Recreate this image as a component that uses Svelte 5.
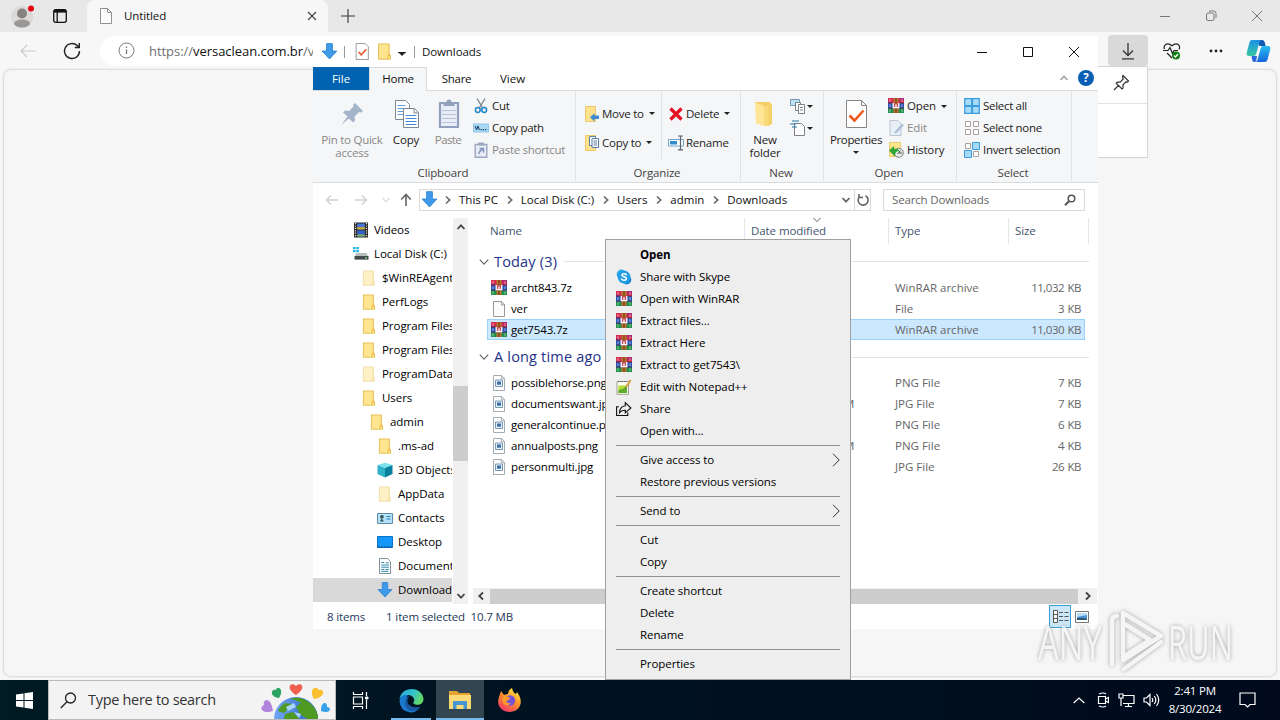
<script>
  let tree = [
    { name: 'Videos', icon: 'video', depth: 0 },
    { name: 'Local Disk (C:)', icon: 'disk', depth: 0 },
    { name: '$WinREAgent', icon: 'folderpale', depth: 1 },
    { name: 'PerfLogs', icon: 'folder', depth: 1 },
    { name: 'Program Files', icon: 'folder', depth: 1 },
    { name: 'Program Files (x86)', icon: 'folder', depth: 1 },
    { name: 'ProgramData', icon: 'folderpale', depth: 1 },
    { name: 'Users', icon: 'folder', depth: 1 },
    { name: 'admin', icon: 'folder', depth: 2 },
    { name: '.ms-ad', icon: 'folder', depth: 3 },
    { name: '3D Objects', icon: 'cube', depth: 3 },
    { name: 'AppData', icon: 'folderpale', depth: 3 },
    { name: 'Contacts', icon: 'contacts', depth: 3 },
    { name: 'Desktop', icon: 'desktop', depth: 3 },
    { name: 'Documents', icon: 'document', depth: 3 },
    { name: 'Downloads', icon: 'down', depth: 3 }
  ];
  let selectedFolder = 'Downloads';
  let selectedFile = 'get7543.7z';

  let groups = [
    {
      title: 'Today (3)',
      files: [
        { name: 'archt843.7z', icon: 'rar', date: '8/30/2024 2:41 PM', type: 'WinRAR archive', size: '11,032 KB' },
        { name: 'ver', icon: 'blank', date: '8/30/2024 2:41 PM', type: 'File', size: '3 KB' },
        { name: 'get7543.7z', icon: 'rar', date: '8/30/2024 2:41 PM', type: 'WinRAR archive', size: '11,030 KB' }
      ]
    },
    {
      title: 'A long time ago (5)',
      files: [
        { name: 'possiblehorse.png', icon: 'image', date: '8/5/2022 3:14 PM', type: 'PNG File', size: '7 KB' },
        { name: 'documentswant.jpg', icon: 'image', date: '12/12/2020 3:14 PM', type: 'JPG File', size: '7 KB' },
        { name: 'generalcontinue.png', icon: 'image', date: '4/8/2021 3:14 PM', type: 'PNG File', size: '6 KB' },
        { name: 'annualposts.png', icon: 'image', date: '10/21/2020 3:14 PM', type: 'PNG File', size: '4 KB' },
        { name: 'personmulti.jpg', icon: 'image', date: '6/6/2021 3:14 PM', type: 'JPG File', size: '26 KB' }
      ]
    }
  ];

  let menu = [
    [
      { label: 'Open', bold: true },
      { label: 'Share with Skype', icon: 'skype' },
      { label: 'Open with WinRAR', icon: 'rar' },
      { label: 'Extract files...', icon: 'rar' },
      { label: 'Extract Here', icon: 'rar' },
      { label: 'Extract to get7543\\', icon: 'rar' },
      { label: 'Edit with Notepad++', icon: 'notepad' },
      { label: 'Share', icon: 'share' },
      { label: 'Open with...' }
    ],
    [{ label: 'Give access to', sub: true }, { label: 'Restore previous versions' }],
    [{ label: 'Send to', sub: true }],
    [{ label: 'Cut' }, { label: 'Copy' }],
    [{ label: 'Create shortcut' }, { label: 'Delete' }, { label: 'Rename' }],
    [{ label: 'Properties' }]
  ];

  let crumbs = ['This PC', 'Local Disk (C:)', 'Users', 'admin', 'Downloads'];
</script>

{#snippet icon(name, size = 16)}
  <svg class="icon" width={size} height={size} viewBox="0 0 16 16" fill="none">
    {#if name === 'rar'}
      <path fill="#d62c4e" d="M0 0h16v5.300H0z" />
      <path fill="#2c53b8" d="M0 5.300h16v5H0z" />
      <path fill="#1f8f4a" d="M0 10.300h16V15H0z" />
      <path fill="#8d2a86" d="M11 0h5v2.500h-5zM0 3.500h3v1.800H0z" opacity=".6" />
      <path stroke="#2c1c3c" d="M0 5.200h16M0 10.200h16" stroke-width=".8" />
      <path fill="#fff" d="M1.500 1h1v3h-1zM13.500 1h1v3h-1zM1.500 6.200h1v3h-1zM13.500 6.200h1v3h-1zM1.500 11.200h1v3h-1zM13.500 11.200h1v3h-1z" opacity=".5" />
      <path fill="#b9742f" d="M5.500 0h5v5h-5zM5.500 10.500h5V15h-5z" />
      <path fill="#7b441b" d="M7.300 0h1.400v15H7.300z" />
      <path fill="#c9525c" d="M5 5h6v5.500H5z" />
      <path stroke="#fff" stroke-width="1.300" d="M5.200 5v4.700h5.600V5M8 6.500v3" />
    {:else if name === 'folder' || name === 'folderpale'}
      <g opacity={name === 'folderpale' ? 0.5 : 1}>
        <path fill="#ffdf7c" stroke="#dfb64b" stroke-width=".8" d="M2.400.900h10v10.400h1.100v4H2.400z" />
        <path fill="#fff0b4" d="M3.200 1.600h7.600v12.800H3.200z" opacity=".35" />
        <path stroke="#e5b840" stroke-width=".8" d="M11.200 15v-3.400h2" />
      </g>
    {:else if name === 'down'}
      <path fill="#3f9bea" stroke="#257fd0" stroke-width=".8" d="M5.300.600h5.400v7h4.200L8 15 1.100 7.600h4.200z" />
    {:else if name === 'blank'}
      <path fill="#fbfbfb" stroke="#8d8d8d" stroke-width=".9" d="M2.500.500h8l3 3v12h-11zM10.300.500v3.300h3.200" />
    {:else if name === 'image'}
      <path fill="#fff" stroke="#9aa3aa" stroke-width=".9" d="M2.500.500h8l3 3v12h-11zM10.300.500v3.300h3.200" />
      <path fill="#e3f1fb" stroke="#6d8caa" stroke-width=".9" d="M4.500 5h7v6.500h-7z" />
      <path fill="#3c6ea3" d="M6 6.500h4v3.200H6z" />
    {:else if name === 'document'}
      <path fill="#fff" stroke="#708793" stroke-width=".9" d="M2.500.500h8l3 3v12h-11z" />
      <path stroke="#2c86a8" d="M4.300 4.500h3M4.300 7h7.500M4.300 9.200h7.500M4.300 11.400h3M8.500 11.400h3.300M4.300 13.300h7" />
      <path stroke="#2c86a8" d="M8.800 4.800h3" />
    {:else if name === 'video'}
      <path fill="#242424" d="M1 .500h14v15H1z" />
      <path fill="#4477d6" d="M4.200 1.500h7.600v6H4.200z" />
      <path fill="#c2a439" d="M4.200 5h7.600v2.500H4.200z" />
      <path fill="#3862ca" d="M4.200 8.500h7.600v6H4.200z" />
      <path fill="#7cb45b" d="M4.200 12.500h7.600v2H4.200z" />
      <path stroke="#e8e8e8" stroke-dasharray="1.200 1.200" stroke-width="1.300" d="M2.500 1v14M13.500 1v14" />
    {:else if name === 'disk'}
      <path fill="#25b8e4" d="M0 1h2.600v2.300H0zM3.300 1h2.600v2.300H3.300zM0 4h2.600v2.300H0zM3.300 4h2.600v2.300H3.300z" />
      <path fill="#b9bec1" d="M3.500 7h10l1.500 3.200H1.500z" />
      <path fill="#454a4d" d="M1.500 10h14v3.600h-14z" />
      <path fill="#65e07a" d="M12 11.300h2v1.200h-2z" />
    {:else if name === 'cube'}
      <path fill="#7ce2ee" d="M8 .700 15.500 3 8 6 .500 3z" />
      <path fill="#2fb1c8" d="M.500 3 8 6v9.400L.500 12z" />
      <path fill="#087f9f" d="M15.500 3 8 6v9.400l7.500-3.400z" />
    {:else if name === 'contacts'}
      <path fill="#b7e3fa" stroke="#5e8ba8" d="M.500 3.500h15v10H.500z" />
      <path fill="#35575b" d="M5 5a1.500 1.500 0 0 1 0 3.600l2 2.900H2.700l2-2.900A1.500 1.500 0 0 1 5 5z" />
      <path stroke="#277eb7" d="M9.500 6.500h4M9.500 9h4" />
    {:else if name === 'desktop'}
      <path fill="#1597fa" stroke="#0872c5" d="M.500 2.500h15v11H.500z" />
      <path stroke="#084a8b" stroke-dasharray="2 1" d="M1 13h14" />
    {:else if name === 'skype'}
      <circle cx="5.400" cy="5.200" r="4.700" fill="#2caae8" />
      <circle cx="10.600" cy="10.800" r="4.700" fill="#1686d9" />
      <circle cx="8" cy="8" r="6.400" fill="#229ee5" />
      <path stroke="#fff" stroke-width="1.500" stroke-linecap="round" d="M10.300 5.800C9.500 4.400 5.800 4.300 5.900 6.300c.1 1.800 4.500 1 4.500 3.200 0 2.100-4 2.100-4.900.500" />
    {:else if name === 'notepad'}
      <path fill="#fafcef" stroke="#888c78" stroke-width=".8" d="M1 2.500h11.500v12.800H1z" />
      <path fill="#b4dc36" d="M2.500 6.500h8.500v7.500H2.500z" />
      <path fill="#5eae2c" d="M2.500 11 11 8.500V14H2.500z" />
      <path stroke="#555" d="M2 2.500h9.500" stroke-dasharray="1 1" />
      <path stroke="#d99a3a" stroke-width="1.800" d="m10 8 4.700-7" />
      <path stroke="#444" d="m9 9.500 1-1.500" />
    {:else if name === 'share'}
      <path stroke="#111" stroke-width="1.100" d="M3 5.700H.600v8.800h11.200v-3" />
      <path stroke="#111" stroke-width="1.100" d="M9.300 1.700 14.900 7l-5.600 4.900V9.200c-3.100-.100-4.600.900-5.800 2.600.200-3.700 2-6.600 5.800-7z" />
    {:else if name === 'cut'}
      <path stroke="#7d8790" stroke-width="1.400" d="M4 .500 9.700 10M12 .500 6.300 10" />
      <circle cx="4.800" cy="12" r="2.400" stroke="#2385c6" stroke-width="1.500" />
      <circle cx="11.200" cy="12" r="2.400" stroke="#2385c6" stroke-width="1.500" />
    {:else if name === 'path'}
      <path fill="#a9d9f7" stroke="#8cc4ea" d="M.500 4h15v8H.500z" />
      <path stroke="#183c5c" d="m2.200 6 1.400 4L5 6l1.400 4" />
      <path stroke="#183c5c" stroke-dasharray="1.300 1" stroke-width="1.200" d="M7.500 9.700h6" />
    {:else if name === 'shortcut'}
      <path fill="#e6eaf4" stroke="#8a9bb8" stroke-width="1.400" d="M2.200 2.500h11.600v12.700H2.200z" />
      <path fill="#8a9bb8" d="M5 .500h6v3H5z" />
      <path stroke="#7189b4" stroke-width="1.500" d="M6 12c0-2.500 1-3.500 4-5M6.500 6.500h4v4" />
    {:else if name === 'moveto'}
      <path fill="#ffe28b" stroke="#edca69" d="M1.500.500h10v15h-10z" />
      <path fill="#428ad0" d="m6 11.300 4.500-4v2.200H15v3.600h-4.500v2.300z" />
    {:else if name === 'copyto'}
      <path fill="#ffe28b" stroke="#edca69" d="M1.500.500h10v15h-10z" />
      <path fill="#fff" stroke="#5a7da8" d="M5.500 1.500h6v9h-6z" />
      <path fill="#fff" stroke="#5a7da8" d="M8 3.500h6.500v9H8zM9.500 6h3.500M9.500 8h3.500M9.500 10h3.500" />
    {:else if name === 'delete'}
      <path stroke="#e31123" stroke-width="3.200" d="m2.500 2.500 11 11M13.500 2.500l-11 11" />
    {:else if name === 'rename'}
      <path fill="#fff" stroke="#74a4ca" d="M.500 4.500h15v6.500H.500z" />
      <path fill="#318ccc" d="M2 6h7v3.500H2z" />
      <path stroke="#5b6570" stroke-width="1.200" d="M12.500 1.500v13M10 1h5M10 14.800h5" />
    {:else if name === 'newitem'}
      <path fill="#b9e1f7" stroke="#7598b0" d="M.500 1.500h9v6h-9z" />
      <path fill="#fff" stroke="#7c8288" d="M5.500 4.500h5v8h-5z" />
      <path fill="#fff" stroke="#7c8288" d="M8.500 6.500h6v9h-6zM10 9.500h3M10 12h3" />
    {:else if name === 'easy'}
      <path fill="#fff" stroke="#7c8288" d="M4.500 3.500h7l3 3v9h-10z" />
      <path stroke="#2676ae" stroke-width="1.200" d="M2 1h7M0 4h6M2 7h5" />
    {:else if name === 'edit'}
      <path fill="#e8eef8" stroke="#aebdd2" d="M2 .500h8l3 3v12H2z" />
      <path stroke="#9fb3cf" stroke-width="2.400" d="m7 13 8-8.500" />
    {:else if name === 'history'}
      <path fill="#ffe58b" stroke="#e9cd73" d="M1.500.500h11v14h-11z" />
      <circle cx="10.800" cy="10.800" r="4.500" fill="#e8eee9" stroke="#77807a" />
      <path fill="#31a638" d="M1 8.500 6 4v2.500c3 0 5 1 6 3-3-1-5 .300-5.200 5z" />
      <path stroke="#474f49" d="m9.500 12 3-3.500M11 11h3" />
    {:else if name === 'selall'}
      <path fill="#a6dafa" stroke="#3b9bdd" stroke-width="1.200" d="M.700.700h7v7h-7zM8.500.700h6.800v7H8.500zM.700 8.500h7v6.800h-7zM8.500 8.500h6.800v6.800H8.500z" />
    {:else if name === 'selnone'}
      <path fill="#fff" stroke="#aaa19c" d="M1.500 1.500h5v5h-5zM9.500 1.500h5v5h-5zM1.500 9.500h5v5h-5zM9.500 9.500h5v5h-5z" />
    {:else if name === 'selinv'}
      <path fill="#fff" stroke="#aaa19c" d="M1.500 1.500h5v5h-5zM9.500 9.500h5v5h-5z" />
      <path fill="#a6dafa" stroke="#3b9bdd" d="M8.500.500h7v7h-7zM.500 8.500h7v7h-7z" />
    {:else if name === 'check'}
      <path fill="#fff" stroke="#8b8b8b" stroke-width=".8" d="M2 .500h8.500L13.500 3.500v12H2z" />
      <path stroke="#e8572b" stroke-width="1.500" d="m4.300 8.500 2.500 2.700 4.800-5.300" />
    {/if}
  </svg>
{/snippet}

{#snippet chevron(dir)}
  <svg class="chev {dir}" width="10" height="10" viewBox="0 0 10 10" fill="none">
    <path d="M1.500 3 5 6.700 8.500 3" />
  </svg>
{/snippet}

{#snippet small(name, label, arrow = false, disabled = false)}
  <button class="small" class:disabled>
    {@render icon(name)}
    <span>{label}</span>
    {#if arrow}<i class="caret"></i>{/if}
  </button>
{/snippet}

<div class="screen">
  <section class="browser">
    <header class="tabstrip">
      <div class="profile">
        <svg width="26" height="26" viewBox="0 0 26 26">
          <circle cx="12" cy="14" r="11" fill="#dcdad8" />
          <circle cx="12" cy="10.500" r="5" fill="#858381" />
          <ellipse cx="12" cy="20.500" rx="8" ry="4" fill="#9a9896" />
          <circle cx="21" cy="5.500" r="3" fill="#e3000f" />
        </svg>
      </div>
      <svg class="workspaces" width="14" height="14" viewBox="0 0 14 14" fill="none" stroke="#111" stroke-width="1.300">
        <rect x=".7" y=".7" width="12.600" height="12.600" rx="2" />
        <path d="M1 2.300h12" stroke-width="2.600" />
        <path d="M4.200 3v10" />
      </svg>
      <div class="tab">
        <svg width="12" height="16" viewBox="0 0 12 16" fill="#fff" stroke="#909090">
          <path d="M.500.500h7l4 4v11H.500zM7.500.500v4h4" />
        </svg>
        <span>Untitled</span>
        <svg class="tabclose" width="10" height="10" viewBox="0 0 10 10" stroke="#444" stroke-width="1.100"><path d="m1 1 8 8M9 1 1 9" /></svg>
      </div>
      <svg class="newtab" width="14" height="14" viewBox="0 0 14 14" stroke="#333" stroke-width="1.100"><path d="M7 0v14M0 7h14" /></svg>
      <div class="wincontrols">
        <svg width="12" height="12" viewBox="0 0 12 12" fill="none"><path d="M1 6.500h10" /></svg>
        <svg width="12" height="12" viewBox="0 0 12 12" fill="none"><rect x="1.500" y="3" width="7.500" height="7.500" rx="1.500" /><path d="M4 1h4.500A2.500 2.500 0 0 1 11 3.500V8" /></svg>
        <svg width="12" height="12" viewBox="0 0 12 12" fill="none"><path d="m1 1 10 10M11 1 1 11" /></svg>
      </div>
    </header>
    <div class="toolbar">
      <svg class="back" width="16" height="14" viewBox="0 0 16 14" fill="none" stroke="#c9c9c9" stroke-width="1.100"><path d="M15.500 7H1M7 1 1 7l6 6" /></svg>
      <svg class="reload" width="18" height="18" viewBox="0 0 18 18" fill="none" stroke="#222" stroke-width="1.400"><path d="M16.500 9a7.500 7.500 0 1 1-2.300-5.400L16 5.300M16.300 1v4.500h-4.500" /></svg>
      <div class="address">
        <svg width="17" height="17" viewBox="0 0 17 17" fill="none" stroke="#777"><circle cx="8.500" cy="8.500" r="7.500" /><path d="M8.500 7.500V12M8.500 4.500V6" stroke-width="1.300" /></svg>
        <span class="url">https://<b>versaclean.com.br</b>/v</span>
      </div>
      <div class="tools">
        <div class="dlbutton">
          <svg width="14" height="18" viewBox="0 0 14 18" fill="none" stroke="#333" stroke-width="1.300"><path d="M7 1v12M2 8.500l5 5 5-5M1 16.800h12" /></svg>
        </div>
        <svg class="health" width="18" height="18" viewBox="0 0 18 18" fill="none" stroke="#222" stroke-width="1.200">
          <path d="M1.500 7C0 3.500 4-.500 9 3.700 14-.500 18 3.500 16 7.500M0 8.500h5l2-3 2.500 6L11 8.500h4M4 11l5 5" />
          <circle cx="13" cy="13.500" r="4" fill="#107c10" stroke="none" /><path d="m11 13.500 1.500 1.500 2.500-3" stroke="#fff" />
        </svg>
        <svg class="dots" width="14" height="4" viewBox="0 0 14 4" fill="#222"><circle cx="2" cy="2" r="1.400" /><circle cx="7" cy="2" r="1.400" /><circle cx="12" cy="2" r="1.400" /></svg>
        <svg class="copilot" width="25" height="24" viewBox="0 0 25 24">
          <defs>
            <linearGradient id="cpa" x1="0" y1="0" x2="0" y2="1"><stop stop-color="#1b90e8" /><stop offset="1" stop-color="#37c9a2" /></linearGradient>
            <linearGradient id="cpb" x1="0" y1="0" x2="0" y2="1"><stop stop-color="#27bdf4" /><stop offset="1" stop-color="#1666db" /></linearGradient>
          </defs>
          <path fill="#1259b4" d="M10 1h6q2 0 2.600 2l1 4h-6z" />
          <path fill="url(#cpa)" d="M6 1h10q-2 0-2.500 2l-3.300 12q-.700 2-2.700 2H3q-3 0-2.200-3.500L3.600 3Q4.200 1 6 1z" />
          <path fill="url(#cpb)" d="M17 7h5q3 0 2.200 3.500L21.400 21q-.600 2-2.400 2H9q2 0 2.500-2l3.300-12q.500-2 2.200-2z" />
          <path fill="#2e65df" d="M5.500 17H11l-.800 5q-.400 1-2 1-1.700-.200-2-2z" />
        </svg>
      </div>
    </div>
    <div class="page"></div>
  </section>

  <div class="flyout">
    <div class="flyhead">
      <svg width="17" height="17" viewBox="0 0 17 17" fill="none" stroke="#333" stroke-width="1.200"><path d="m10 1.500 5.500 5.500-1 1-1.500-.200-3 3 .100 3.200-1.100 1-5.800-5.800 1-1.200 3 .100L10.200 5 9.500 2.500zM5.800 11.200 1 16" /></svg>
    </div>
  </div>

  <section class="explorer">
    <header class="titlebar">
      {@render icon('down', 17)}
      <i class="bar"></i>
      {@render icon('check', 17)}
      {@render icon('folder', 17)}
      <i class="caret qat"></i>
      <i class="bar"></i>
      <span>Downloads</span>
      <div class="buttons">
        <svg width="12" height="12" viewBox="0 0 12 12" fill="none"><path d="M1 6.500h10" /></svg>
        <svg width="12" height="12" viewBox="0 0 12 12" fill="none"><path d="M1.500 1.500h9v9h-9z" /></svg>
        <svg width="12" height="12" viewBox="0 0 12 12" fill="none"><path d="m1 1 10 10M11 1 1 11" /></svg>
      </div>
    </header>

    <nav class="tabs">
      <span class="file">File</span>
      <span class="home">Home</span>
      <span class="share">Share</span>
      <span class="view">View</span>
      <div class="help">
        {@render chevron('up')}
        <b>?</b>
      </div>
    </nav>

    <div class="ribbon">
      <div class="group clipboard">
        <div class="content">
          <button class="large disabled pin">
            <svg width="28" height="30" viewBox="0 0 28 30"><path fill="#a4b4c9" d="m17 4 8 8-2 1.500-2-.500-4.500 4.500.500 4-2 2-4-4-7.500 6 6-8-4.500-4 2-2 4 .400L15.500 7.500 15 6z" /></svg>
            <span>Pin to Quick<br />access</span>
          </button>
          <button class="large copy">
            <svg width="28" height="30" viewBox="0 0 28 30" fill="#fff" stroke="#7d8793">
              <path d="M3.500 1.500h10l4 4v15h-14z" /><path stroke="#64a0dc" d="M5.500 6.500h8M5.500 9.500h10M5.500 12.500h10M5.500 15.500h10" />
              <path d="M11.500 9.500h11l4 4v15h-15zM22 9.500v4.500h4.500" /><path stroke="#4089d6" d="M13.500 16.500h11M13.500 19.500h11M13.500 22.500h11M13.500 25.500h11" />
            </svg>
            <span>Copy</span>
          </button>
          <button class="large disabled paste">
            <svg width="24" height="30" viewBox="0 0 24 30" fill="none"><path fill="#e8edf7" stroke="#91a1bd" stroke-width="2.200" d="M4 4h18v24H4z" /><path fill="#91a1bd" d="M7.500 3h3a2.500 2.500 0 0 1 5 0h3v4h-11z" /><path stroke="#b7c3d9" d="M6 11.500h14M6 15.500h14M6 19.500h14M6 23.500h14" /></svg>
            <span>Paste</span>
          </button>
          <div class="stack">
            {@render small('cut', 'Cut')}
            {@render small('path', 'Copy path')}
            {@render small('shortcut', 'Paste shortcut', false, true)}
          </div>
        </div>
        <footer>Clipboard</footer>
      </div>
      <div class="group organize">
        <div class="content">
          <div class="stack wide">
            {@render small('moveto', 'Move to', true)}
            {@render small('copyto', 'Copy to', true)}
          </div>
          <div class="stack wide second">
            {@render small('delete', 'Delete', true)}
            {@render small('rename', 'Rename')}
          </div>
        </div>
        <footer>Organize</footer>
      </div>
      <div class="group new">
        <div class="content">
          <button class="large">
            <svg width="26" height="30" viewBox="0 0 26 30"><path fill="#f3cf69" d="M3 3h15l2 3v19l-4 2V9L3 4z" /><path fill="#ffe596" d="M3 3.500 12 7v20L4 24.500z" /><path fill="#f9d978" d="M12 7h4.500v20L12 27z" /></svg>
            <span>New<br />folder</span>
          </button>
          <div class="stack items">
            {@render small('newitem', '', true)}
            {@render small('easy', '', true)}
          </div>
        </div>
        <footer>New</footer>
      </div>
      <div class="group open">
        <div class="content">
          <button class="large">
            <svg width="26" height="30" viewBox="0 0 26 30" fill="#fff" stroke="#858585"><path d="M3.500 1.500h15l5 5v22h-20zM18.500 1.500v5h5" /><path fill="none" stroke="#f05a22" stroke-width="2.600" d="m6.500 16.500 5 5 9-10" /></svg>
            <span>Properties</span>
            <i class="caret"></i>
          </button>
          <div class="stack">
            {@render small('rar', 'Open', true)}
            {@render small('edit', 'Edit', false, true)}
            {@render small('history', 'History')}
          </div>
        </div>
        <footer>Open</footer>
      </div>
      <div class="group select">
        <div class="content">
          <div class="stack">
            {@render small('selall', 'Select all')}
            {@render small('selnone', 'Select none')}
            {@render small('selinv', 'Invert selection')}
          </div>
        </div>
        <footer>Select</footer>
      </div>
    </div>

    <div class="navrow">
      <svg class="navarrow" width="14" height="12" viewBox="0 0 14 12" stroke="#d2d2d2"><path d="M13 6H1.500M6 1.500 1.500 6 6 10.500" /></svg>
      <svg class="navarrow" width="14" height="12" viewBox="0 0 14 12" stroke="#d2d2d2"><path d="M1 6h11.500M8 1.500 12.500 6 8 10.500" /></svg>
      <span class="recent">{@render chevron('down')}</span>
      <svg class="navarrow up" width="12" height="14" viewBox="0 0 12 14" stroke="#666"><path d="M6 13V1.500M1.200 6.500 6 1.500l4.800 5" /></svg>
      <div class="crumbs">
        {@render icon('down', 17)}
        {#each crumbs as crumb}
          {@render chevron('right')}
          <span>{crumb}</span>
        {/each}
        <div class="crumbend">
          {@render chevron('down')}
          <svg width="14" height="14" viewBox="0 0 14 14" fill="none" stroke="#666" stroke-width="1.600"><path d="M9.500 2.700A5 5 0 1 1 4 3.200M3 1v3.500h4" /></svg>
        </div>
      </div>
      <div class="search">
        <span>Search Downloads</span>
        <svg width="12" height="12" viewBox="0 0 12 12" fill="none" stroke="#555" stroke-width="1.500"><circle cx="7.500" cy="4.500" r="3.300" /><path d="M5.200 7 1 11.200" stroke-width="2" /></svg>
      </div>
    </div>

    <div class="body">
      <aside>
        {#each tree as node}
          <div class="node d{node.depth}" class:current={node.name === selectedFolder}>
            {@render icon(node.icon)}
            <span>{node.name}</span>
          </div>
        {/each}
      </aside>
      <div class="vscroll">
        {@render chevron('up')}
        <div class="thumb"></div>
        {@render chevron('down')}
      </div>
      <div class="list">
        <div class="head">
          <span class="name">Name</span>
          <span class="date">Date modified {@render chevron('down')}</span>
          <span>Type</span>
          <span>Size</span>
        </div>
        {#each groups as group}
          <div class="grouphead">
            {@render chevron('down')}
            <span>{group.title}</span>
            <hr />
          </div>
          {#each group.files as file}
            <div class="row" class:selected={file.name === selectedFile}>
              <div class="name">{@render icon(file.icon)}<span>{file.name}</span></div>
              <span class="when">{file.date}</span>
              <span>{file.type}</span>
              <span class="size">{file.size}</span>
            </div>
          {/each}
        {/each}
        <div class="hscroll">
          {@render chevron('left')}
          <div class="thumb"></div>
          {@render chevron('right')}
        </div>
      </div>
    </div>

    <footer class="status">
      <span>8 items</span>
      <span>1 item selected&nbsp; 10.7 MB</span>
      <div class="views">
        <svg class="active" width="22" height="23" viewBox="0 0 22 23" fill="none" stroke="#555"><path fill="#fff" d="M4.500 5.500h4v12h-4zM4.500 9.500h4M4.500 13.500h4" /><path d="M10 7.500h4M15.500 7.500h4M10 11.500h4M15.500 11.500h4M10 15.500h4M15.500 15.500h4" /></svg>
        <svg width="14" height="12" viewBox="0 0 14 12"><path fill="#fff" stroke="#777" d="M.500.500h13v11H.500z" /><path fill="#4f94d9" d="M2 2h10v6H2z" /><path fill="#b9daf3" d="M2 2h10v2L2 6z" /><path fill="#31556d" d="M2 7q6-1 10 1v1H2z" /></svg>
      </div>
    </footer>
  </section>

  <svg class="watermark" width="200" height="70" viewBox="0 0 200 70" fill="none">
    <g class="ghost">
      <text x="2" y="54" textLength="64" lengthAdjust="spacingAndGlyphs">ANY</text>
      <text x="132" y="54" textLength="65" lengthAdjust="spacingAndGlyphs">RUN</text>
      <path stroke-width="4.500" stroke-linejoin="round" stroke-linecap="round" d="M81 10q-5 0-5 5v43M87 48V7l38 23-38 24M88 63l37-27M87 17l27 17-27 17" />
    </g>
  </svg>

  <footer class="taskbar">
    <div class="start">
      <svg width="17" height="17" viewBox="0 0 17 17" fill="#fff"><path d="M0 2.500 7.500 1.400V8H0zM8.500 1.300 17 0v8H8.500zM0 9h7.500v6.600L0 14.500zM8.500 9H17v8l-8.500-1.300z" /></svg>
    </div>
    <div class="tasksearch">
      <svg width="17" height="17" viewBox="0 0 17 17" fill="none" stroke="#222" stroke-width="1.300"><circle cx="10.500" cy="6" r="5" /><path d="M7 9.800.800 16" /></svg>
      <span>Type here to search</span>
      <svg class="earth" width="70" height="38" viewBox="0 0 70 38">
        <defs><linearGradient id="sea"><stop stop-color="#73a7f6" /><stop offset="1" stop-color="#2362be" /></linearGradient></defs>
        <circle cx="36" cy="38" r="22" fill="url(#sea)" />
        <path fill="#4f9a22" d="M30 18q10-4 20 4 8 7 8 16H47l-7-5-4-7 5-4-6-3zM25 22l8 1-5 5-4 4-6-2q2-5 7-8zM25 33l8-2 7 8H24z" />
        <path fill="#a8d6fb" d="m26 26 8-4 2 4-8 4zM34 31l7 2-2 4z" />
        <path fill="#f0604d" d="M36 14C24 6 32 0 36 5c4-5 12 1 0 9z" />
        <path fill="#2ba363" d="M19 17C8 15 12 7 16 9c1-5 9-1 3 8z" />
        <path fill="#fac02f" d="M54 18C48 8 56 4 59 9c5-2 8 7-5 9z" />
        <path fill="#b184dc" d="M13 30C1 34-1 26 4 24c-2-6 7-9 9 6z" />
        <path fill="#37a2ec" d="M61 30c0-11 7-9 6-4 5 0 4 8-6 4z" />
      </svg>
    </div>
    <div class="app">
      <svg width="17" height="17" viewBox="0 0 17 17" fill="none" stroke="#fff"><path d="M1.500 0v2.500h9V0M1.500 5h9v7h-9zM1.500 17v-2.500h9V17M14.500 0v4M14.500 8v9" stroke-width="1.200" /><path fill="#fff" d="M13.500 5h2.500v2h-2.500z" /></svg>
    </div>
    <div class="app running">
      <svg width="25" height="25" viewBox="0 0 25 25">
        <defs><linearGradient id="edg" x1="0" y1="0" x2="1" y2=".4"><stop stop-color="#27a5dd" /><stop offset=".6" stop-color="#36c3cb" /><stop offset="1" stop-color="#62d668" /></linearGradient></defs>
        <path fill="#1a78cf" d="M.500 13Q1 6 9 6.500C5 13 10 22 21 19q-4 6-10 5.500Q1 23 .500 13z" />
        <path fill="url(#edg)" d="M.500 12C1-2 23-3 24.500 11c0 6-7 7-10 4.500-.700-1 1-1.500.700-4C14.500 8 11 6.500 8 7 4 7 1 9 .500 12z" />
        <path fill="#1b559f" d="M8.500 12c-1 5 4.500 10 12.500 7-4 6-14 5-15-3q0-6 4.500-8.500-1.500 2-2 4.500z" />
      </svg>
    </div>
    <div class="app running active">
      <svg width="22" height="20" viewBox="0 0 22 20"><path fill="#e3a32f" d="M0 1h8l2 2h11v5H0z" /><path fill="#ffda76" d="M0 5h22v14H0z" /><path fill="#4596d3" d="M4 19v-8h14v8h-3.500v-4h-7v4z" /></svg>
    </div>
    <div class="app">
      <svg width="23" height="24" viewBox="0 0 23 24">
        <defs><linearGradient id="fx" x1=".8" y1="0" x2=".2" y2="1"><stop stop-color="#fff04a" /><stop offset=".45" stop-color="#ff9329" /><stop offset="1" stop-color="#f1306e" /></linearGradient></defs>
        <path fill="url(#fx)" d="M1 9l2-6 3 4q2-1 4-1 0-4 4-6 1 5 4 6l1-2c7 9 4 19-7 20C3 24-2 17 1 9z" />
        <circle cx="12" cy="12.500" r="5.200" fill="#7652d8" />
        <path fill="#ff9b2c" d="M5 9q4-2 7 1-1 3-4 3 1 3 5 2-3 4-7 1-3-3-1-7z" />
      </svg>
    </div>
    <div class="tray">
      <svg width="12" height="7" viewBox="0 0 12 7"><path d="m.700 6 5.300-5 5.300 5" /></svg>
      <svg class="cam" width="12" height="16" viewBox="0 0 12 16"><path d="M1.500 4.500h7v7h-7zM8.500 7l3-1.500v5l-3-1.500M2 2q4-2 7 0M2 14q4 2 7 0" /></svg>
      <svg width="17" height="15" viewBox="0 0 17 15"><path d="M5 2.500h11v8H5M1 1h4v4H1zM3 5v8M10.500 10.500v3M7 13.500h7" /></svg>
      <svg width="17" height="14" viewBox="0 0 17 14"><path d="M1 5h2.500L7 1.500v11L3.500 9H1zM9 5q1.500 2 0 4M11.300 3q3 4 0 8M13.500 1q4.500 6 0 12" /></svg>
    </div>
    <div class="clock">2:41 PM<br />8/30/2024</div>
    <div class="notify">
      <svg width="17" height="16" viewBox="0 0 17 16"><path d="M1 1h15v11.500h-5l-2.500 2.500-2.500-2.500H1z" /></svg>
    </div>
  </footer>

  <div class="contextmenu">
    {#each menu as section}
      <ul>
        {#each section as item}
          <li class:bold={item.bold}>
            <span class="slot">{#if item.icon}{@render icon(item.icon)}{/if}</span>
            <span>{item.label}</span>
            {#if item.sub}
              <svg class="submenu" width="8" height="14" viewBox="0 0 8 14" fill="none" stroke="#333"><path d="m1 .800 6.200 6.200L1 13.200" /></svg>
            {/if}
          </li>
        {/each}
      </ul>
    {/each}
  </div>
</div>

<style>
  :global(body) {
    background: #f7f7f7;
    overflow: hidden;
  }

  .screen {
    position: relative;
    width: 1280px;
    height: 720px;
    overflow: hidden;
    font-family: 'Open Sans', 'Noto Sans', sans-serif;
    font-size: 11.5px;
    line-height: 16px;
    color: #111;
    white-space: nowrap;
  }

  svg { flex: none; display: block; }
  button {
    border: 0;
    padding: 0;
    background: none;
    font: inherit;
    letter-spacing: inherit;
    color: inherit;
  }

  .chev { stroke: #666; stroke-width: 1.3; }
  .chev.up { transform: rotate(180deg); }
  .chev.right { transform: rotate(-90deg); }
  .chev.left { transform: rotate(90deg); }

  .caret {
    width: 0;
    height: 0;
    border: 3px solid transparent;
    border-top-color: #222;
    border-bottom: 0;
  }

  /* browser */
  .browser {
    display: flex;
    flex-direction: column;
    height: 680px;
    background: #f7f7f7;
  }
  .tabstrip {
    display: flex;
    align-items: center;
    height: 32px;
    background: #e8e8e8;
  }
  .profile { margin-left: 10px; }
  .workspaces { margin-left: 17px; }
  .tab {
    display: flex;
    align-items: center;
    align-self: stretch;
    width: 217px;
    margin-left: 20px;
    padding: 0 11px 0 13px;
    background: #f7f7f7;
    border-radius: 8px 8px 0 0;
  }
  .tab span { margin-left: 12px; letter-spacing: -.1px; }
  .tabclose { margin-left: auto; }
  .newtab { margin-left: 13px; }
  .wincontrols {
    display: flex;
    gap: 34px;
    margin-left: auto;
    margin-right: 17px;
    stroke: #777;
  }
  .toolbar {
    display: flex;
    align-items: center;
    height: 37px;
  }
  .back { margin-left: 20px; }
  .reload { margin-left: 27px; }
  .address {
    display: flex;
    align-items: center;
    width: 800px;
    height: 30px;
    margin-left: 19px;
    padding-left: 18px;
    background: #fff;
    border-radius: 15px;
    box-sizing: border-box;
  }
  .url { margin-left: 14px; font-size: 13px; color: #707070; letter-spacing: -.04px; }
  .url b { font-weight: 400; color: #111; }
  .tools { display: flex; align-items: center; margin-left: auto; margin-right: 9px; }
  .dlbutton {
    display: grid;
    place-items: center;
    width: 40px;
    height: 31px;
    background: #d9d9d9;
    border-radius: 4px;
  }
  .health { margin-left: 15px; }
  .dots { margin-left: 28px; }
  .copilot { margin-left: 23px; }
  .page {
    flex: 1;
    margin: 0 3px 3px;
    border: 1px solid #dedede;
    border-radius: 8px;
    background: #f6f6f6;
    box-shadow: 0 0 2px #ddd;
  }

  .flyout {
    position: absolute;
    left: 1090px;
    top: 66px;
    width: 56px;
    height: 90px;
    border: 1px solid #d4d4d4;
    background: #fff;
  }
  .flyhead {
    display: flex;
    align-items: center;
    justify-content: flex-end;
    height: 37px;
    padding: 0 17px 6px 0;
    box-sizing: border-box;
    border-bottom: 1px solid #e2e2e2;
  }

  /* explorer window */
  .explorer {
    position: absolute;
    left: 313px;
    top: 36px;
    display: flex;
    flex-direction: column;
    width: 785px;
    height: 593px;
    background: #fff;
  }
  .titlebar {
    display: flex;
    align-items: center;
    height: 31px;
    padding-left: 8px;
  }
  .titlebar .bar { width: 1px; height: 12px; background: #999; margin: 0 9px 0 6px; }
  .titlebar .icon + .icon { margin-left: 5px; }
  .titlebar .qat { margin-left: 5px; border-width: 4px; border-bottom: 0; position: relative; top: 2px; }
  .titlebar .qat::before { content: ''; position: absolute; left: -4px; top: -4px; width: 8px; height: 1px; background: #222; }
  .titlebar .qat + .bar { margin: 0 7px 0 8px; }
  .titlebar span { letter-spacing: -.1px; }
  .buttons { display: flex; gap: 34px; margin-left: auto; margin-right: 18px; stroke: #111; }

  .tabs {
    display: flex;
    height: 24px;
    line-height: 23px;
    text-align: center;
    box-sizing: border-box;
    border-bottom: 1px solid #dadbdc;
  }
  .tabs .file { width: 56px; background: #0063b1; color: #fff; }
  .tabs .home { width: 58px; height: 24px; background: #f5f6f7; border: solid #dadbdc; border-width: 1px 1px 0; box-sizing: border-box; line-height: 22px; letter-spacing: -.3px; }
  .tabs .share { width: 59px; letter-spacing: -.3px; }
  .tabs .view { width: 53px; }
  .help { display: flex; align-items: center; gap: 9px; margin-left: auto; margin-right: 4px; padding-bottom: 1px; }
  .help .chev { stroke: #999; }
  .help b { width: 16px; height: 16px; border-radius: 50%; background: #0a5fb4; color: #fff; line-height: 16px; }

  .ribbon {
    display: flex;
    height: 92px;
    box-sizing: border-box;
    border-bottom: 1px solid #dadbdc;
    background: #f5f6f7;
    color: #222;
    letter-spacing: -.15px;
  }
  .group {
    display: flex;
    flex-direction: column;
    box-sizing: border-box;
    border-right: 1px solid #e2e3e4;
    height: 90px;
  }
  .group footer { text-align: center; color: #444; padding-right: 2px; }
  .content { display: flex; height: 75px; }
  .clipboard { width: 263px; }
  .organize { width: 165px; }
  .new { width: 83px; }
  .open { width: 133px; }
  .select { width: 115px; }
  .large {
    display: flex;
    flex-direction: column;
    align-items: center;
    padding-top: 8px;
    line-height: 13px;
  }
  .large span { margin-top: 4px; }
  .large .caret { margin-top: 5px; }
  .disabled { color: #888; }
  .disabled .icon { opacity: .85; }
  .pin { width: 64px; margin-left: 7px; letter-spacing: -.25px; }
  .copy { width: 44px; }
  .paste { width: 40px; letter-spacing: -.6px; }
  .stack { display: flex; flex-direction: column; padding: 4px 0 0 5px; }
  .clipboard .stack { letter-spacing: -.3px; }
  .small { display: flex; align-items: center; height: 22px; }
  .small span { margin-left: 3px; }
  .small .caret { margin-left: 5px; }
  .wide { flex: none; padding: 8px 0 0 8px; width: 77px; height: 60px; }
  .wide .small { height: 29px; }
  .wide .small span { margin-left: 2px; letter-spacing: -.25px; }
  .wide.second { border-left: 1px solid #e2e3e4; padding-left: 6px; width: 70px; }
  .new .large { width: 40px; margin-left: 4px; }
  .new .small span { margin: 0; }
  .new .small .caret { margin-left: 1px; }
  .new .stack { padding-left: 5px; }
  .open .large { width: 56px; margin-left: 4px; letter-spacing: -.35px; }
  .open .stack { padding-left: 4px; }
  .select .stack { padding-left: 7px; letter-spacing: -.3px; }

  .navrow { display: flex; align-items: center; height: 35px; padding-bottom: 2px; box-sizing: border-box; }
  .navarrow { fill: none; stroke-width: 1.6; margin-left: 12px; }
  .navarrow + .navarrow { margin-left: 15px; }
  .recent { margin-left: 13px; }
  .recent .chev { stroke: #ddd; }
  .navarrow.up { margin-left: 9px; }
  .crumbs {
    display: flex;
    align-items: center;
    width: 452px;
    height: 22px;
    margin-left: 7px;
    padding-left: 1px;
    box-sizing: border-box;
    border: 1px solid #d9d9d9;
  }
  .crumbs > .chev { margin: 0 6px 0 5px; stroke-width: 1.6; }
  .crumbs > .chev + span { margin-right: 1.8px; }
  .crumbend { display: flex; align-items: center; margin-left: auto; height: 20px; }
  .crumbend .chev { stroke-width: 1.8; margin-right: 3px; }
  .crumbend svg + svg { border-left: 1px solid #d9d9d9; padding: 3px 0 3px 1px; }
  .search {
    display: flex;
    align-items: center;
    justify-content: space-between;
    width: 202px;
    height: 22px;
    margin-left: 12px;
    padding: 0 8px;
    box-sizing: border-box;
    border: 1px solid #d9d9d9;
    color: #666;
    letter-spacing: -.15px;
  }

  .body { display: flex; height: 386px; }
  aside { width: 139px; overflow: hidden; color: #000; letter-spacing: -.05px; }
  .node { display: flex; align-items: center; gap: 5px; height: 24px; }
  .node.current { background: #d9d9d9; }
  .d0 { padding-left: 40px; }
  .d1 { padding-left: 48px; }
  .d2 { padding-left: 56px; }
  .d3 { padding-left: 64px; }
  .vscroll {
    display: flex;
    flex-direction: column;
    align-items: center;
    width: 15px;
    margin: 0 1px;
    padding: 4px 0 3px;
    box-sizing: border-box;
    background: #f0f0f0;
  }
  .vscroll .thumb { width: 15px; height: 75px; margin: 154px 0 auto; background: #cdcdcd; }
  .vscroll .chev, .hscroll .chev { stroke: #444; stroke-width: 1.8; }

  .list { display: flex; flex-direction: column; width: 624px; margin-left: 4px; }
  .head { display: grid; grid-template-columns: 272px 144px 120px 80px; height: 26px; line-height: 25px; color: #44546e; letter-spacing: -.08px; }
  .head span { border-right: 1px solid #e5e5e5; padding-left: 6px; }
  .head .name { padding-left: 17px; }
  .date { position: relative; }
  .date .chev { position: absolute; left: 67px; top: -3px; stroke-width: 1; }
  .grouphead {
    display: flex;
    align-items: center;
    height: 33px;
    padding: 2px 8px 0 5px;
    box-sizing: border-box;
    font-size: 14.5px;
    color: #1e3287;
    letter-spacing: .18px;
  }
  .grouphead .chev { width: 12px; height: 12px; stroke-width: 1; }
  .row + .grouphead { height: 32px; }
  .grouphead span { margin: 0 7px 0 4px; }
  .grouphead hr { flex: 1; border: 0; border-top: 1px solid #e2e2e2; margin: 0; }
  .row {
    display: grid;
    grid-template-columns: 257px 144px 120px 73px;
    align-items: center;
    height: 21px;
    margin-left: 14px;
    margin-right: 12px;
    color: #666;
  }
  .row > span { padding-left: 7px; }
  .row > .when { letter-spacing: -.22px; }
  .row > .size { text-align: right; padding: 0; letter-spacing: -.5px; word-spacing: 1px; }
  .row.selected { background: #cce8ff; box-shadow: inset 0 0 0 1px #99d1ff; }
  .row .name { display: flex; align-items: center; padding-left: 4px; gap: 4px; color: #000; letter-spacing: -.15px; }
  .hscroll { display: flex; align-items: center; height: 16px; margin-top: auto; background: #f0f0f0; padding: 0 4px 0 3px; }
  .hscroll .thumb { flex: 1; height: 15px; margin: 0 5px 0 4px; background: #cdcdcd; }

  .status { display: flex; align-items: center; height: 25px; padding-left: 14px; color: #1e395b; letter-spacing: -.15px; }
  .status span + span { margin-left: 21px; }
  .views { display: flex; align-items: center; gap: 4px; margin-left: auto; margin-right: 9px; }
  .views .active { background: #cce8f8; outline: 1px solid #3b9fd6; outline-offset: -1px; }

  .watermark { position: absolute; left: 1036px; top: 606px; }
  .ghost { opacity: .75; filter: drop-shadow(0 0 2px #888); stroke: #f5f5f5; }
  .ghost text { font-size: 48px; fill: #f5f5f5; stroke: none; }

  /* context menu */
  .contextmenu {
    position: absolute;
    left: 605px;
    top: 239px;
    width: 246px;
    height: 441px;
    padding: 4px 10px 0;
    box-sizing: border-box;
    border: 1px solid #a0a0a0;
    background: #eee;
    color: #000;
    letter-spacing: -.08px;
  }
  ul { list-style: none; margin: 0; padding: 0; }
  ul + ul { border-top: 1px solid #919191; margin-top: 3px; padding-top: 3px; }
  li { display: flex; align-items: center; height: 22px; }
  .slot { width: 24px; }
  .bold { font-weight: 700; }
  .submenu { margin-left: auto; }

  /* taskbar */
  .taskbar {
    display: flex;
    height: 40px;
    background: linear-gradient(90deg, #001b24, #001220 45%, #000a1c);
    color: #fff;
  }
  .start { display: grid; place-items: center; width: 48px; }
  .tasksearch {
    display: flex;
    align-items: center;
    width: 288px;
    padding: 0 5px 0 11px;
    box-sizing: border-box;
    border: 1px solid #bbb;
    background: #f3f3f3;
    color: #333;
    font-size: 14.5px;
    letter-spacing: -.3px;
  }
  .tasksearch span { margin-left: 11px; }
  .earth { margin-left: auto; }
  .app { display: grid; place-items: center; width: 48px; margin-right: 3px; box-sizing: border-box; }
  .app.running { background: linear-gradient(#76b9ed, #76b9ed) center bottom / 40px 2px no-repeat; margin-right: 1px; }
  .app.running.active { background: linear-gradient(#76b9ed, #76b9ed) center bottom / 48px 2px no-repeat #314650; }
  .tray { display: flex; align-items: center; gap: 10px; margin-left: auto; }
  .tray .cam { margin: 0 -3px 0 2px; }
  .tray svg:last-child { margin-left: -2px; }
  .tray svg:nth-child(3) { margin-left: 2px; }
  .tray svg, .notify svg { fill: none; stroke: #fff; stroke-width: 1.2; }
  .clock { width: 54px; margin-left: 8px; padding-top: 2px; text-align: center; line-height: 18px; letter-spacing: -.2px; }
  .notify { display: grid; place-items: center; width: 16px; margin: 0 25px 0 17px; }
</style>
